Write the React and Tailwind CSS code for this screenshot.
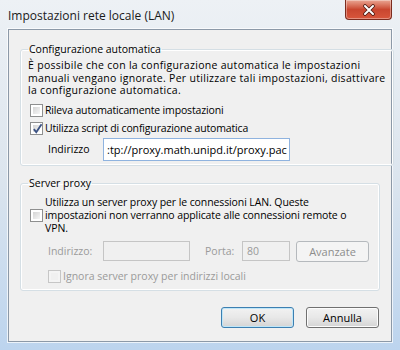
import React from 'react';

const font = { fontFamily: '"Segoe UI", "Open Sans", "Noto Sans", sans-serif' };

function Check({ checked, disabled }) {
  return (
    <span
      className={`flex h-[13px] w-[13px] shrink-0 items-center justify-center border p-[2px] ${
        disabled ? 'border-[#c6c6c6] bg-[#f4f4f4]' : 'border-[#8e8f8f] bg-white'
      }`}
    >
      <span
        className={`relative block h-full w-full ${
          disabled ? 'bg-[#f0f0f0]' : 'bg-gradient-to-br from-[#d4d4d4] to-[#f6f6f6]'
        }`}
      >
        {checked && (
          <svg viewBox="0 0 9 9" className="absolute left-[-1px] top-[-2px] h-[11px] w-[11px]">
            <path d="M1.5 5 L3.5 7.5 L7.8 1" fill="none" stroke="#3c5384" strokeWidth="1.5" />
          </svg>
        )}
      </span>
    </span>
  );
}

function Btn({ children, primary, disabled }) {
  return (
    <button
      className={`flex h-[21px] w-[73px] items-center justify-center rounded-[3px] border text-[11px] ${
        disabled
          ? 'border-[#b5b9bd] bg-[#f4f4f4] text-[#8d8d8d]'
          : primary
          ? 'border-[#3c7fb1] bg-gradient-to-b from-[#f2f2f2] via-[#e8e8e8] to-[#d4d4d4] text-black shadow-[inset_0_0_0_1px_#bfe6f8]'
          : 'border-[#707070] bg-gradient-to-b from-[#f2f2f2] via-[#e8e8e8] to-[#d4d4d4] text-black shadow-[inset_0_0_0_1px_#fcfcfc]'
      }`}
    >
      {children}
    </button>
  );
}

export default function App() {
  return (
    <div
      style={font}
      className="flex h-[350px] w-[400px] flex-col overflow-hidden whitespace-nowrap bg-gradient-to-b from-[#edf1f5] via-[#dce5ee] to-[#bcd4ee] text-[10.5px] leading-[13px] text-black"
    >
      {/* title bar */}
      <div className="flex h-[29px] shrink-0 items-start justify-between">
        <span className="pl-[8px] pt-[9px] text-[12px] leading-[14px] text-[#1a1a1a]">
          Impostazioni rete locale (LAN)
        </span>
        <button className="mr-[8px] flex h-[20px] w-[47px] items-center justify-center rounded-b-[4px] border border-t-0 border-[#7b2c1f] bg-gradient-to-b from-[#e9a593] via-[#c9462f] to-[#d8563c] shadow-[inset_0_0_0_1px_rgba(255,255,255,0.35)]">
          <svg viewBox="0 0 14 12" className="h-[12px] w-[14px]">
            <path d="M3 2 L11 10 M11 2 L3 10" stroke="#4a1a12" strokeWidth="3.6" strokeLinecap="round" />
            <path d="M3 2 L11 10 M11 2 L3 10" stroke="#ffffff" strokeWidth="2" strokeLinecap="round" />
          </svg>
        </button>
      </div>

      {/* client area */}
      <div className="mx-[8px] h-[313px] shrink-0 border border-[#8c99a8] bg-[#f0f0f0] px-[11px] shadow-[0_0_0_1px_rgba(255,255,255,0.7)]">
        <fieldset className="mt-[13px] rounded-[3px] border border-[#d5dfe5] px-[7px] pb-[4px] pt-[3px] shadow-[inset_0_0_0_1px_#ffffff]">
          <legend className="px-[1px]">Configurazione automatica</legend>
          <p className="leading-[12.5px] tracking-[0.3px]">
            È possibile che con la configurazione automatica le impostazioni
            <br />
            manuali vengano ignorate. Per utilizzare tali impostazioni, disattivare
            <br />
            la configurazione automatica.
          </p>
          <label className="mt-[7px] flex items-center gap-[2px] pl-[2px] tracking-[-0.15px]">
            <Check />
            <span>Rileva automaticamente impostazioni</span>
          </label>
          <label className="mt-[5px] flex items-center gap-[2px] pl-[2px] tracking-[-0.15px]">
            <Check checked />
            <span>Utilizza script di configurazione automatica</span>
          </label>
          <div className="mt-[3px] flex items-center">
            <span className="ml-[20px] w-[55px] shrink-0">Indirizzo</span>
            <div className="flex h-[23px] w-[187px] shrink-0 items-center overflow-hidden border border-[#8fb3df] bg-white pl-[3px] text-[11px]">
              <span>:tp://proxy.math.unipd.it/proxy.pac</span>
            </div>
          </div>
        </fieldset>

        <fieldset className="mt-[11px] rounded-[3px] border border-[#d5dfe5] px-[7px] pb-[7px] pt-[6px] shadow-[inset_0_0_0_1px_#ffffff]">
          <legend className="px-[1px]">Server proxy</legend>
          <div className="flex items-center pl-[2px]">
            <Check />
            <p className="ml-[2px] tracking-[-0.1px]">
              Utilizza un server proxy per le connessioni LAN. Queste
              <br />
              impostazioni non verranno applicate alle connessioni remote o
              <br />
              VPN.
            </p>
          </div>
          <div className="mt-[6px] flex items-center text-[#9a9a9a]">
            <span className="ml-[20px] w-[55px] shrink-0">Indirizzo:</span>
            <div className="h-[20px] w-[87px] shrink-0 border border-[#c5c5c5] bg-[#f0f0f0]" />
            <span className="ml-[15px] w-[37px] shrink-0">Porta:</span>
            <div className="flex h-[20px] w-[48px] shrink-0 items-center border border-[#c5c5c5] bg-[#f0f0f0] pl-[4px]">
              80
            </div>
            <div className="ml-[6px]">
              <Btn disabled>Avanzate</Btn>
            </div>
          </div>
          <label className="mt-[8px] flex items-center gap-[2px] pl-[20px] text-[#9a9a9a]">
            <Check disabled />
            <span>Ignora server proxy per indirizzi locali</span>
          </label>
        </fieldset>

        <div className="mt-[16px] flex justify-end gap-[12px] pr-[1px]">
          <Btn primary>OK</Btn>
          <Btn>Annulla</Btn>
        </div>
      </div>
    </div>
  );
}
